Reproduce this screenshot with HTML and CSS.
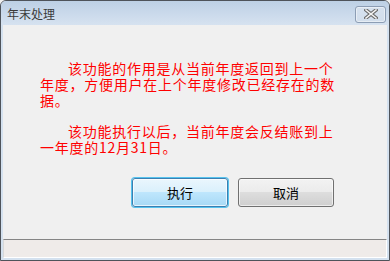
FILE: index.html
```html
<!DOCTYPE html>
<html lang="zh-CN">
<head>
<meta charset="utf-8">
<title>年末处理</title>
<link rel="stylesheet" href="styles.css">
</head>
<body>
<div class="window">
  <div class="titlebar">
    <span class="title">年末处理</span>
    <button class="close" type="button" aria-label="关闭">
      <svg width="14" height="10" viewBox="0 0 14 10">
        <path d="M2 1 L12 9 M12 1 L2 9" stroke="#6b6b6b" stroke-width="3.6" stroke-linecap="square"/>
        <path d="M2 1 L12 9 M12 1 L2 9" stroke="#f4f4f4" stroke-width="1.6" stroke-linecap="square"/>
      </svg>
    </button>
  </div>
  <div class="client">
    <div class="message">
      <p class="para">该功能的作用是从当前年度返回到上一个<br>年度，方便用户在上个年度修改已经存在的数<br>据。</p>
      <p class="para">该功能执行以后，当前年度会反结账到上<br>一年度的12月31日。</p>
    </div>
    <div class="buttons">
      <button class="btn btn-primary" type="button">执行</button>
      <button class="btn" type="button">取消</button>
    </div>
    <div class="statusbar"></div>
  </div>
</div>
</body>
</html>
```

FILE: styles.css
```css
* { box-sizing: border-box; }
html, body { margin: 0; padding: 0; }
body {
  width: 390px;
  height: 261px;
  background: #f0f0f0;
  font-family: "Noto Sans CJK SC", "Noto Sans", sans-serif;
  overflow: hidden;
}
.window {
  width: 390px;
  height: 261px;
  border: 1px solid #4e535a;
  border-radius: 6px 6px 0 0;
  background: #d4e1ef;
  display: flex;
  flex-direction: column;
}
.titlebar {
  height: 24px;
  flex: none;
  display: flex;
  align-items: center;
  justify-content: space-between;
  padding: 0 3px 0 6px;
  background: linear-gradient(#bdd0e5, #d6e2f0);
  border-radius: 5px 5px 0 0;
}
.title {
  font-size: 12px;
  color: #3a3a3a;
  line-height: 12px;
  margin-top: 1px;
}
.close {
  width: 31px;
  height: 17px;
  margin-top: 2px;
  padding: 0;
  border: 1px solid #8c9db4;
  border-radius: 3px;
  background: linear-gradient(#d6e1ee, #d2deec);
  box-shadow: inset 0 0 0 1px rgba(255,255,255,0.45);
  display: flex;
  align-items: center;
  justify-content: center;
}
.client {
  flex: 1;
  margin: 0 2px 2px 2px;
  background: #f0f0f0;
  display: flex;
  flex-direction: column;
}
.message {
  padding: 35px 0 0 37px;
  color: #ff0000;
  font-size: 14px;
  letter-spacing: 0.75px;
  line-height: 16px;
  flex: 1;
}
.para {
  margin: 0 0 15px 0;
  text-indent: 28px;
}
.buttons {
  display: flex;
  gap: 10px;
  padding-left: 129px;
  margin-bottom: 32px;
}
.btn {
  width: 96px;
  height: 29px;
  padding: 0;
  font-family: "Noto Sans CJK SC", sans-serif;
  font-size: 13px;
  color: #000;
  border: 1px solid #707070;
  border-radius: 3px;
  background: linear-gradient(#f2f2f2 0%, #ebebeb 50%, #dddddd 50%, #cfcfcf 100%);
  box-shadow: inset 0 0 0 1px rgba(255,255,255,0.6);
}
.btn-primary {
  border: 1px solid #3c7fb1;
  background: linear-gradient(#eaf6fd 0%, #d9f0fc 50%, #bee6fd 50%, #a7d9f5 100%);
  box-shadow: 0 0 0 1px #55c3ee, inset 0 0 0 1px rgba(255,255,255,0.7);
}
.statusbar {
  height: 19px;
  flex: none;
  background: #efebe9;
  border-top: 1px solid #858585;
  border-bottom: 1px solid #ffffff;
  border-right: 1px solid #ffffff;
  border-left: 1px solid #d8d8d8;
}
```
